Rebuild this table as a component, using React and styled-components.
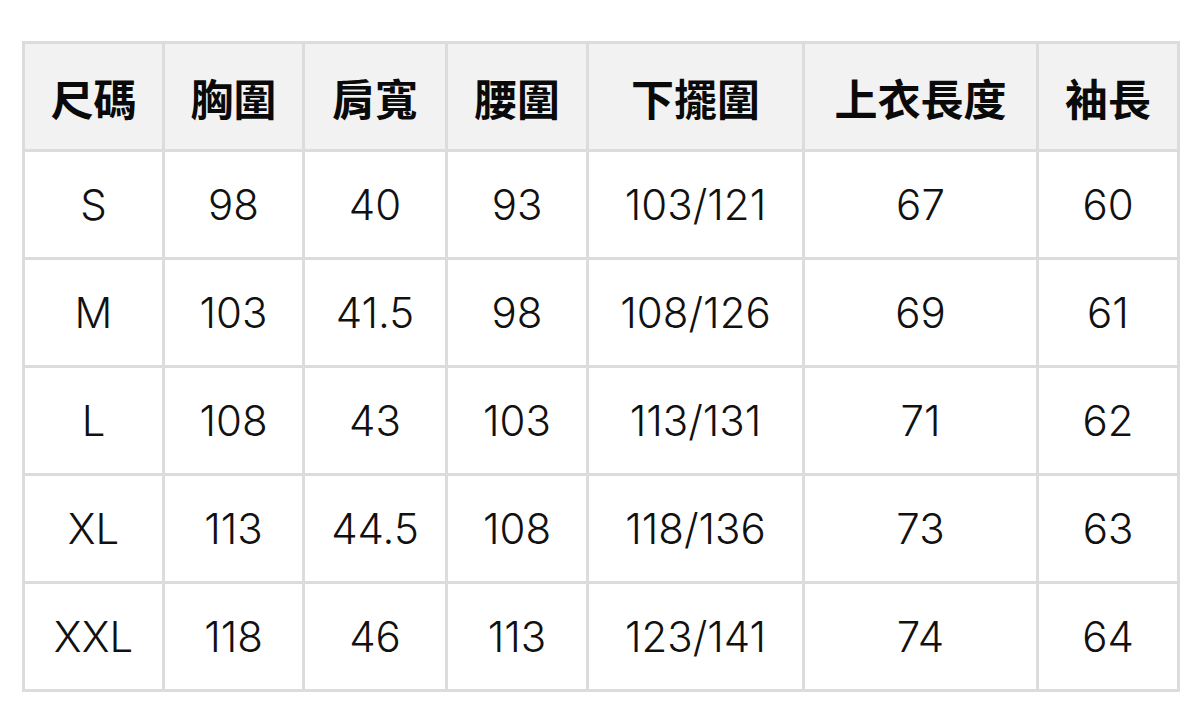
import styled, { createGlobalStyle } from "styled-components";

const GlobalStyle = createGlobalStyle`
    html, body {
        margin: 0;
        padding: 0;
        background: #ffffff;
    }
    body {
        font-family: Inter, "Noto Sans CJK TC", sans-serif;
        color: #111111;
    }
`;

const columns = [
    { label: '尺碼', width: 140 },
    { label: '胸圍', width: 140 },
    { label: '肩寬', width: 143 },
    { label: '腰圍', width: 141 },
    { label: '下擺圍', width: 216 },
    { label: '上衣長度', width: 234 },
    { label: '袖長', width: 141 },
];

const rows = [
    ['S', '98', '40', '93', '103/121', '67', '60'],
    ['M', '103', '41.5', '98', '108/126', '69', '61'],
    ['L', '108', '43', '103', '113/131', '71', '62'],
    ['XL', '113', '44.5', '108', '118/136', '73', '63'],
    ['XXL', '118', '46', '113', '123/141', '74', '64'],
];

function App() {
    return (
        <Page>
            <GlobalStyle />
            <SizeTable>
                <colgroup>
                    {columns.map((c) => <col key={c.label} style={{ width: c.width }} />)}
                </colgroup>
                <thead>
                    <tr>
                        {columns.map((c) => <HeadCell key={c.label}>{c.label}</HeadCell>)}
                    </tr>
                </thead>
                <tbody>
                    {rows.map((row) => (
                        <tr key={row[0]}>
                            {row.map((value, i) => <Cell key={i}>{value}</Cell>)}
                        </tr>
                    ))}
                </tbody>
            </SizeTable>
        </Page>
    );
}

const Page = styled.div`
    width: 1200px;
    height: 724px;
    padding: 41px 0 0 22px;
    box-sizing: border-box;
`;

const SizeTable = styled.table`
    width: 1156px;
    table-layout: fixed;
    border-collapse: collapse;
    border: 3px solid #dcdcdc;
`;

const HeadCell = styled.th`
    height: 105px;
    padding: 0;
    border: 3px solid #dcdcdc;
    background: #f2f2f2;
    font-family: "Noto Sans CJK TC", "Noto Sans CJK SC", sans-serif;
    font-weight: 700;
    font-size: 43px;
    text-align: center;
    vertical-align: middle;
    color: #0a0a0a;
`;

const Cell = styled.td`
    height: 105px;
    padding: 0;
    border: 3px solid #dcdcdc;
    font-family: Inter, "Liberation Sans", sans-serif;
    font-weight: 300;
    font-size: 42px;
    text-align: center;
    vertical-align: middle;
    color: #111111;
`;

export default App;
